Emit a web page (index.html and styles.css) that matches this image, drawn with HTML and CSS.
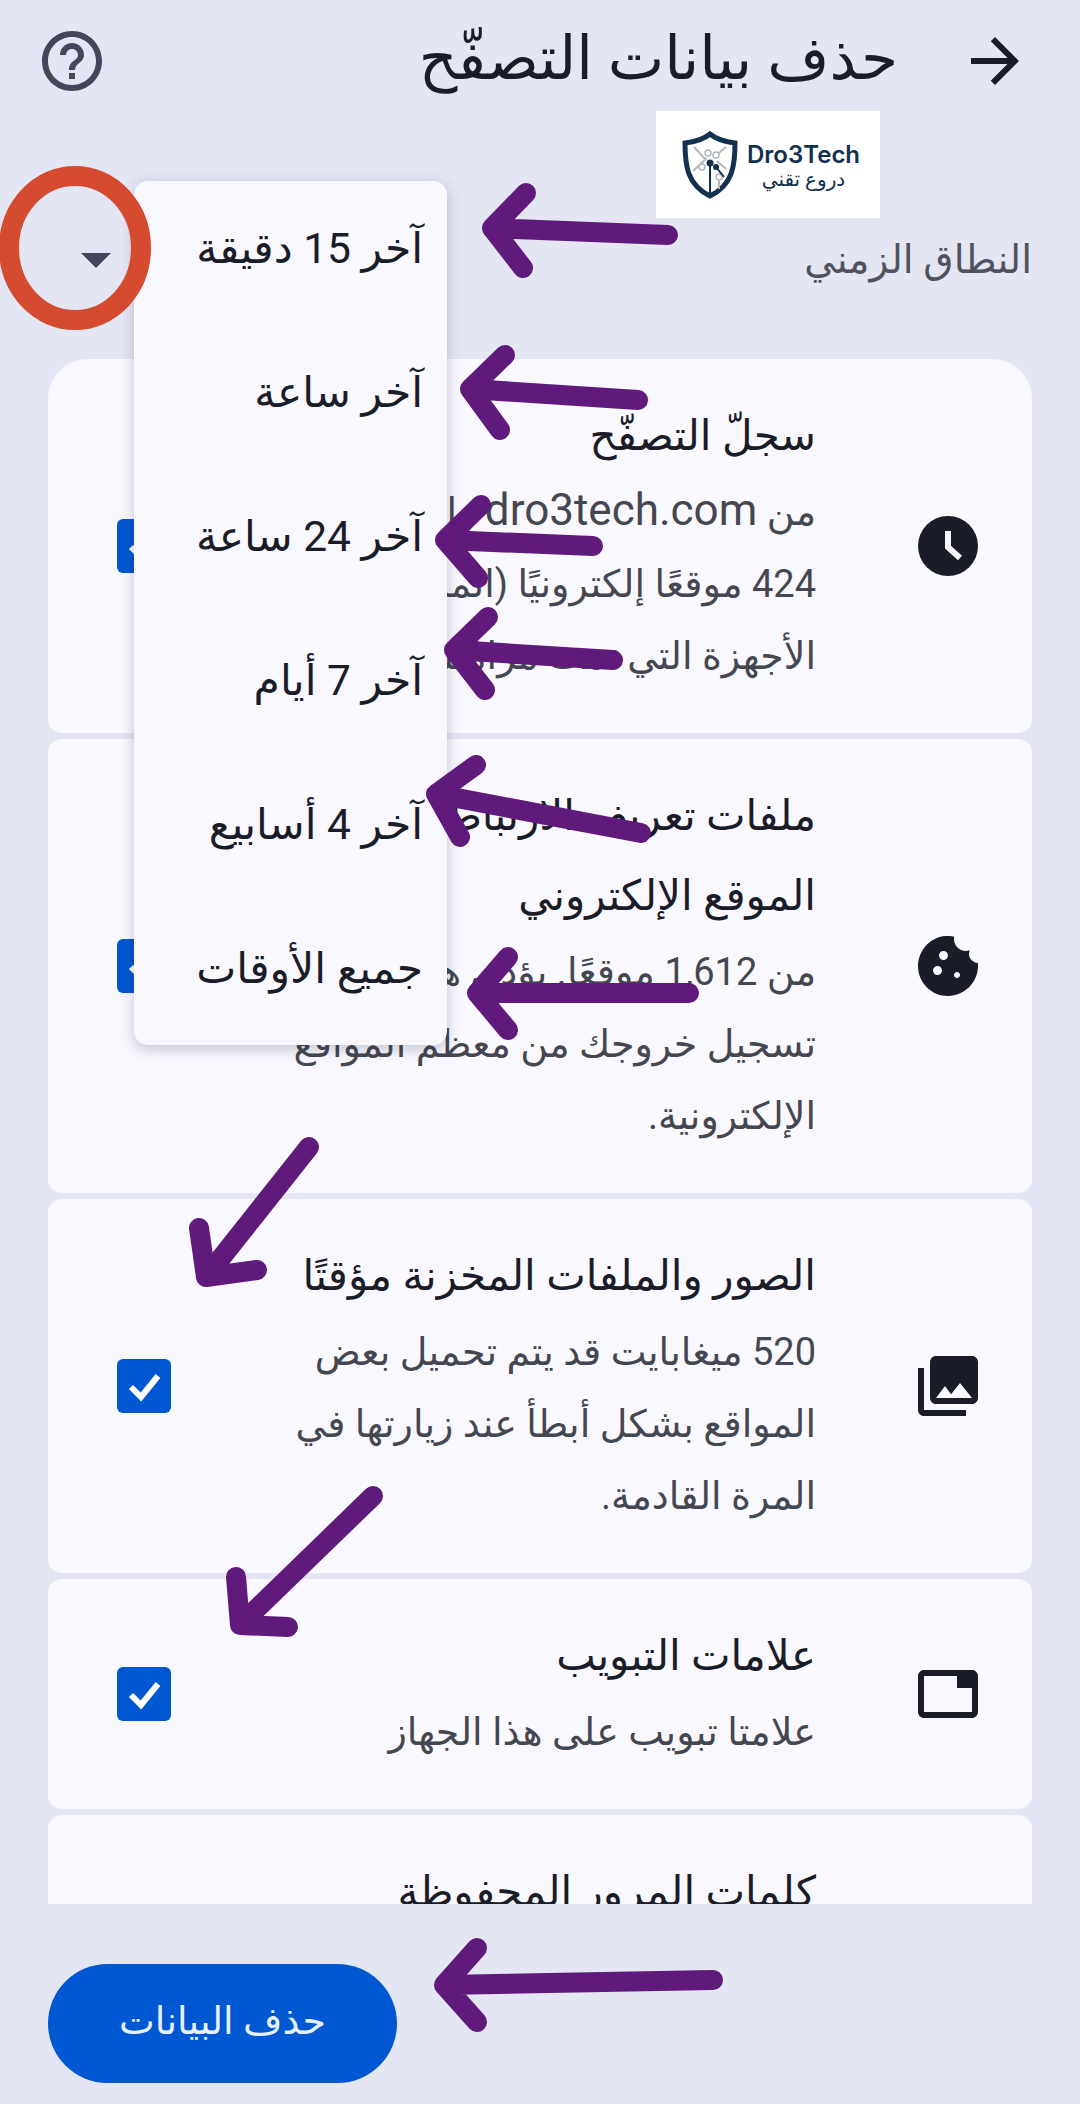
FILE: index.html
```
<!DOCTYPE html>
<html lang="ar" dir="rtl">
<head>
    <meta charset="utf-8">
    <title>حذف بيانات التصفّح</title>
    <link rel="stylesheet" href="styles.css">
</head>
<body>
    <div class="page">
        <div class="top-bar">
            <svg class="top-icon dark" viewBox="0 0 24 24"><path d="M12 4l-1.41 1.41L16.17 11H4v2h12.17l-5.58 5.59L12 20l8-8z"/></svg>
            <div class="page-title">حذف بيانات التصفّح</div>
            <svg class="top-icon grey" viewBox="0 0 24 24"><path d="M11 18h2v-2h-2v2zm1-16C6.48 2 2 6.48 2 12s4.48 10 10 10 10-4.48 10-10S17.52 2 12 2zm0 18c-4.41 0-8-3.59-8-8s3.59-8 8-8 8 3.59 8 8-3.59 8-8 8zm0-14c-2.21 0-4 1.79-4 4h2c0-1.1.9-2 2-2s2 .9 2 2c0 2-3 1.75-3 5h2c0-2.25 3-2.5 3-5 0-2.21-1.79-4-4-4z"/></svg>
        </div>

        <div class="range-row">
            <div class="range-label">النطاق الزمني</div>
            <div class="range-caret"></div>
        </div>

        <div class="list">
            <div class="card first">
                <svg class="card-icon" viewBox="2 2 20 20"><circle cx="12" cy="12" r="10"/><path class="hand" d="M12 7v5.4l4 3.6"/></svg>
                <div class="card-text">
                    <div class="card-title">سجلّ التصفّح</div>
                    <div class="card-desc">من <span class="latin">dro3tech.com</span> وإلى<br>424 موقعًا إلكترونيًا (المزامنة على<br>الأجهزة التي تمت مزامنتها)</div>
                </div>
                <div class="check"><svg viewBox="0 0 54 54"><path d="M14 28l10 10 17-21"/></svg></div>
            </div>

            <div class="card">
                <svg class="card-icon" viewBox="2 2 20 20"><path d="M21.95 10.99c-1.79-.03-3.7-1.95-2.68-4.22-2.97 1-5.78-1.59-5.19-4.56C7.11.74 2 6.41 2 12c0 5.52 4.48 10 10 10 5.89 0 10.54-5.08 9.95-11.01zM8.5 15c-.83 0-1.5-.67-1.5-1.5S7.67 12 8.5 12s1.5.67 1.5 1.5S9.33 15 8.5 15zm2-5C9.67 10 9 9.33 9 8.5S9.67 7 10.5 7s1.5.67 1.5 1.5-.67 1.5-1.5 1.5zm4.5 6c-.55 0-1-.45-1-1s.45-1 1-1 1 .45 1 1-.45 1-1 1z"/></svg>
                <div class="card-text">
                    <div class="card-title">ملفات تعريف الارتباط وبيانات<br>الموقع الإلكتروني</div>
                    <div class="card-desc">من 1,612 موقعًا. يؤدي هذا إلى<br>تسجيل خروجك من معظم المواقع<br>الإلكترونية.</div>
                </div>
                <div class="check"><svg viewBox="0 0 54 54"><path d="M14 28l10 10 17-21"/></svg></div>
            </div>

            <div class="card">
                <svg class="card-icon" viewBox="2 2 20 20"><path d="M22 16V4c0-1.1-.9-2-2-2H8c-1.1 0-2 .9-2 2v12c0 1.1.9 2 2 2h12c1.1 0 2-.9 2-2zm-11-4l2.03 2.71L16 11l4 5H8l3-4zM2 6v14c0 1.1.9 2 2 2h14v-2H4V6H2z"/></svg>
                <div class="card-text">
                    <div class="card-title">الصور والملفات المخزنة مؤقتًا</div>
                    <div class="card-desc">520 ميغابايت قد يتم تحميل بعض<br>المواقع بشكل أبطأ عند زيارتها في<br>المرة القادمة.</div>
                </div>
                <div class="check"><svg viewBox="0 0 54 54"><path d="M14 28l10 10 17-21"/></svg></div>
            </div>

            <div class="card">
                <svg class="card-icon short" viewBox="2 4 20 16"><path d="M20 4H4c-1.1 0-2 .9-2 2v12c0 1.1.9 2 2 2h16c1.1 0 2-.9 2-2V6c0-1.1-.9-2-2-2zm0 14H4V6h11v4h5v8z"/></svg>
                <div class="card-text">
                    <div class="card-title">علامات التبويب</div>
                    <div class="card-desc">علامتا تبويب على هذا الجهاز</div>
                </div>
                <div class="check"><svg viewBox="0 0 54 54"><path d="M14 28l10 10 17-21"/></svg></div>
            </div>

            <div class="card">
                <div class="card-icon"></div>
                <div class="card-text">
                    <div class="card-title">كلمات المرور المحفوظة</div>
                </div>
            </div>
        </div>

        <div class="bottom-bar">
            <div class="delete-btn">حذف البيانات</div>
        </div>

        <!-- dropdown open over the list -->
        <div class="menu">
            <div class="menu-item">آخر 15 دقيقة</div>
            <div class="menu-item">آخر ساعة</div>
            <div class="menu-item">آخر 24 ساعة</div>
            <div class="menu-item">آخر 7 أيام</div>
            <div class="menu-item">آخر 4 أسابيع</div>
            <div class="menu-item">جميع الأوقات</div>
        </div>

        <!-- pasted watermark -->
        <div class="logo">
            <svg class="logo-shield" viewBox="0 0 56 68">
                <path class="shield-line" d="M28 3C22 8 12 11 3 12c0 22 2 42 25 53 23-11 25-31 25-53C44 11 34 8 28 3z"/>
                <path class="circuit" d="M12 16l12 13M44 16L32 26M11 40l14-13M44 38L35 30M37 46v12"/>
                <circle class="node" cx="26" cy="22" r="3"/><circle class="node" cx="34" cy="24" r="3"/><circle class="node" cx="20" cy="36" r="3"/><circle class="node" cx="37" cy="46" r="3"/>
                <path class="stem" d="M28 32v30M34 36l8 10"/>
                <circle class="dot" cx="28" cy="32" r="3.5"/><circle class="dot" cx="34" cy="36" r="3"/>
            </svg>
            <div class="logo-text">
                <div class="logo-en">Dro3Tech</div>
                <div class="logo-ar">دروع تقني</div>
            </div>
        </div>

        <!-- hand drawn marks on top of the screenshot -->
        <svg class="marks" viewBox="0 0 1080 2104">
            <ellipse class="ring" cx="75" cy="248" rx="66" ry="72"/>
            <path class="arrow" d="M668 235L492 228M526 193L492 228L523 268"/>
            <path class="arrow" d="M638 400L470 389M505 355L470 389L500 430"/>
            <path class="arrow" d="M593 546L445 540M481 505L445 540L478 578"/>
            <path class="arrow" d="M613 660L454 650M488 617L454 650L485 690"/>
            <path class="arrow" d="M641 833L436 794M476 765L436 794L460 837"/>
            <path class="arrow" d="M689 993L477 993M508 957L477 993L508 1030"/>
            <path class="arrow" d="M309 1147L206 1277M199 1228L206 1277L257 1270"/>
            <path class="arrow" d="M373 1496L240 1625M236 1577L240 1625L288 1627"/>
            <path class="arrow" d="M713 1980L444 1985M477 1948L444 1985L477 2022"/>
        </svg>
    </div>
</body>
</html>
```

FILE: styles.css
```
* {
    box-sizing: border-box;
}

body {
    margin: 0;
    font-family: Roboto, "DejaVu Sans", sans-serif;
    background-color: #e4e6f4;
    color: #1a1c28;
}

.page {
    position: relative;
    display: flex;
    flex-direction: column;
    width: 1080px;
    height: 2104px;
    overflow: hidden;
}

.top-bar {
    display: flex;
    align-items: center;
    height: 122px;
    padding: 0 49px 0 36px;
}

.top-icon {
    width: 72px;
    height: 72px;
}

.top-icon.dark {
    fill: #1a1c28;
}

.top-icon.grey {
    fill: #44475a;
}

.page-title {
    flex: 1;
    margin-right: 61px;
    padding-bottom: 4px;
    font-size: 60px;
    line-height: 60px;
}

.range-row {
    display: flex;
    align-items: center;
    justify-content: space-between;
    height: 237px;
    padding: 108px 48px 69px 81px;
}

.range-label {
    font-size: 39px;
    line-height: 60px;
    color: #50535f;
}

.range-caret {
    width: 0;
    height: 0;
    border-left: 15px solid transparent;
    border-right: 15px solid transparent;
    border-top: 15px solid #44475a;
}

.list {
    flex: 1;
    min-height: 0;
    overflow: hidden;
    display: flex;
    flex-direction: column;
    gap: 6px;
    margin: 0 48px;
}

.card {
    flex-shrink: 0;
    display: flex;
    align-items: center;
    padding: 39px 54px 39px 69px;
    background-color: #f9f8ff;
    border-radius: 14px;
}

.card.first {
    border-radius: 40px 40px 14px 14px;
}

.card-icon {
    flex-shrink: 0;
    width: 60px;
    height: 60px;
    fill: #1a1c28;
}

.card-icon.short {
    height: 48px;
}

.hand {
    fill: none;
    stroke: #f9f8ff;
    stroke-width: 2;
}

.card-text {
    flex: 1;
    min-width: 0;
    margin-right: 102px;
    margin-top: -2px;
    margin-bottom: 2px;
    white-space: nowrap;
}

.card-title {
    font-size: 42px;
    line-height: 80px;
}

.card-desc {
    font-size: 38px;
    line-height: 72px;
    color: #44474f;
}

.latin {
    font-size: 44px;
    line-height: 1;
}

.check {
    flex-shrink: 0;
    width: 54px;
    height: 54px;
    background-color: #0057d2;
    border-radius: 6px;
}

.check svg {
    display: block;
    fill: none;
    stroke: #fff;
    stroke-width: 6;
}

.bottom-bar {
    display: flex;
    height: 200px;
    padding: 60px 48px 0;
    justify-content: flex-end;
}

.delete-btn {
    width: 349px;
    height: 119px;
    line-height: 115px;
    text-align: center;
    font-size: 38px;
    color: #e6f0ff;
    background-color: #0057d2;
    border-radius: 60px;
}

.menu {
    position: absolute;
    top: 181px;
    left: 134px;
    width: 313px;
    background-color: #f9f8ff;
    border-radius: 14px;
    box-shadow: 0 4px 14px rgba(40, 44, 70, 0.25);
}

.menu-item {
    height: 144px;
    line-height: 136px;
    padding-right: 24px;
    font-size: 42.5px;
    white-space: nowrap;
}

.logo {
    position: absolute;
    top: 111px;
    left: 656px;
    width: 224px;
    height: 107px;
    display: flex;
    align-items: center;
    padding-left: 26px;
    direction: ltr;
    background-color: #fff;
    color: #12304f;
}

.logo-shield {
    width: 56px;
    height: 68px;
    flex-shrink: 0;
}

.shield-line {
    fill: #fff;
    stroke: #12304f;
    stroke-width: 5;
}

.circuit {
    fill: none;
    stroke: #b4b8bd;
    stroke-width: 2;
}

.node {
    fill: #fff;
    stroke: #b4b8bd;
    stroke-width: 1.5;
}

.stem {
    fill: none;
    stroke: #12304f;
    stroke-width: 2;
}

.dot {
    fill: #12304f;
}

.logo-text {
    margin-left: 9px;
    text-align: center;
}

.logo-en {
    font-family: Inter, sans-serif;
    font-size: 24px;
    line-height: 28px;
    font-weight: 600;
}

.logo-ar {
    font-size: 20px;
    line-height: 20px;
    direction: rtl;
}

.marks {
    position: absolute;
    top: 0;
    left: 0;
    width: 1080px;
    height: 2104px;
    pointer-events: none;
}

.ring {
    fill: none;
    stroke: #d44b30;
    stroke-width: 20;
}

.arrow {
    fill: none;
    stroke: #5f1a7b;
    stroke-width: 20;
    stroke-linecap: round;
    stroke-linejoin: round;
}
```
